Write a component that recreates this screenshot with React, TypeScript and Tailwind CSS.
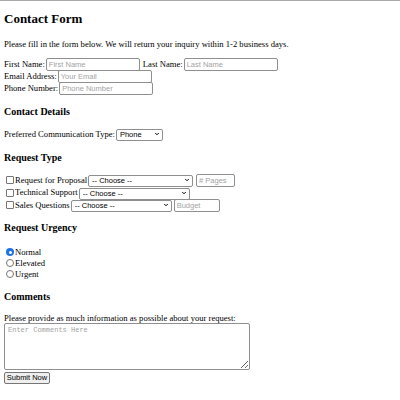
import { ChevronDown } from 'lucide-react';

const serif = { fontFamily: '"Liberation Serif", "Times New Roman", serif' };

function TextBox({ placeholder, className }: { placeholder: string; className: string }) {
  return (
    <input
      type="text"
      placeholder={placeholder}
      className={`h-[13px] border border-[#8f8f8f] rounded-[2px] bg-white px-[2px] text-[7.5px] leading-none text-black placeholder:text-[#a3a3a3] outline-none font-['Liberation_Sans',Arial,sans-serif] ${className}`}
    />
  );
}

function Dropdown({ value, className }: { value: string; className: string }) {
  return (
    <div className={`relative h-[12px] ${className}`}>
      <select
        defaultValue={value}
        className="appearance-none w-full h-full border border-[#8f8f8f] rounded-[2px] bg-white pl-[3px] pr-[10px] text-[7.5px] leading-none text-black outline-none font-['Liberation_Sans',Arial,sans-serif]"
      >
        <option>{value}</option>
      </select>
      <ChevronDown className="absolute right-[3px] top-[3px] w-[6px] h-[6px] text-black pointer-events-none" strokeWidth={4} />
    </div>
  );
}

function Check({ label }: { label: string }) {
  return (
    <label className="flex items-center">
      <span className="ml-[2px] mr-[1px] w-[8px] h-[8px] border border-[#767676] rounded-[1px] bg-white" />
      <span>{label}</span>
    </label>
  );
}

function Radio({ label, checked }: { label: string; checked?: boolean }) {
  return (
    <label className="flex items-center h-[11px]">
      <span
        className={`ml-[2px] mr-[1px] w-[8px] h-[8px] rounded-full flex items-center justify-center ${
          checked ? 'bg-[#1a73e8]' : 'border border-[#767676] bg-white'
        }`}
      >
        {checked && <span className="w-[3px] h-[3px] rounded-full bg-white" />}
      </span>
      <span>{label}</span>
    </label>
  );
}

export default function App() {
  return (
    <div className="w-[400px] h-[400px] bg-white border-t border-[#a8a8a8] text-black text-[8.6px]" style={serif}>
      <div className="px-[4px]">
        <h1 className="mt-[10px] text-[13px] leading-[16px] font-bold">Contact Form</h1>
        <p className="mt-[11px] leading-[12px]">
          Please fill in the form below. We will return your inquiry within 1-2 business days.
        </p>

        <div className="mt-[8px] flex flex-col">
          <div className="flex items-center h-[12px] gap-[1px]">
            <span>First Name:</span>
            <TextBox placeholder="First Name" className="w-[94px]" />
            <span className="ml-[2px]">Last Name:</span>
            <TextBox placeholder="Last Name" className="w-[94px]" />
          </div>
          <div className="flex items-center h-[12px] gap-[1px]">
            <span>Email Address:</span>
            <TextBox placeholder="Your Email" className="w-[94px]" />
          </div>
          <div className="flex items-center h-[12px] gap-[1px]">
            <span>Phone Number:</span>
            <TextBox placeholder="Phone Number" className="w-[94px]" />
          </div>
        </div>

        <h3 className="mt-[12px] text-[10px] leading-[12px] font-bold">Contact Details</h3>
        <div className="mt-[10px] flex items-center h-[12px] gap-[1px]">
          <span>Preferred Communication Type:</span>
          <Dropdown value="Phone" className="w-[47px]" />
        </div>

        <h3 className="mt-[12px] text-[10px] leading-[12px] font-bold">Request Type</h3>
        <div className="mt-[10px] flex flex-col">
          <div className="flex items-center h-[12.5px] gap-[1px]">
            <Check label="Request for Proposal" />
            <Dropdown value="-- Choose --" className="w-[105px]" />
            <TextBox placeholder="# Pages" className="w-[39px] ml-[2px]" />
          </div>
          <div className="flex items-center h-[12.5px] gap-[1px]">
            <Check label="Technical Support" />
            <Dropdown value="-- Choose --" className="w-[111px]" />
          </div>
          <div className="flex items-center h-[12.5px] gap-[1px]">
            <Check label="Sales Questions" />
            <Dropdown value="-- Choose --" className="w-[101px]" />
            <TextBox placeholder="Budget" className="w-[46px] ml-[1px]" />
          </div>
        </div>

        <h3 className="mt-[10px] text-[10px] leading-[12px] font-bold">Request Urgency</h3>
        <div className="mt-[13px] flex flex-col">
          <Radio label="Normal" checked />
          <Radio label="Elevated" />
          <Radio label="Urgent" />
        </div>

        <h3 className="mt-[11px] text-[10px] leading-[12px] font-bold">Comments</h3>
        <p className="mt-[10px] leading-[10px]">Please provide as much information as possible about your request:</p>
        <textarea
          placeholder="Enter Comments Here"
          className="block w-[246px] h-[47px] border border-[#8f8f8f] rounded-[2px] bg-white px-[3px] py-[2px] text-[7px] leading-[9px] resize-y outline-none placeholder:text-[#a3a3a3] font-['Liberation_Mono',monospace]"
        />
        <button className="mt-[2px] h-[12px] w-[46px] border border-[#767676] rounded-[2px] bg-[#efefef] text-[7.5px] leading-none font-['Liberation_Sans',Arial,sans-serif]">
          Submit Now
        </button>
      </div>
    </div>
  );
}
